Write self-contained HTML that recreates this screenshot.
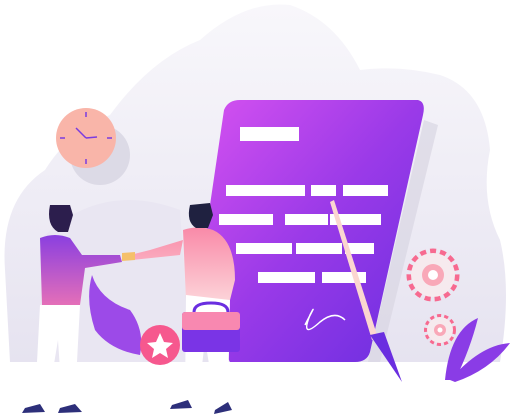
<!DOCTYPE html>
<html><head><style>html,body{margin:0;padding:0;background:#fff;}svg{display:block}</style></head>
<body>
<svg width="512" height="417" viewBox="0 0 512 417" xmlns="http://www.w3.org/2000/svg">
<defs>
<linearGradient id="doc" x1="0" y1="0" x2="1" y2="1"><stop offset="0" stop-color="#d752f0"/><stop offset="0.5" stop-color="#9a3ae8"/><stop offset="1" stop-color="#6a2ee0"/></linearGradient>
<linearGradient id="bg" x1="0" y1="0" x2="0" y2="1"><stop offset="0" stop-color="#f8f7fb"/><stop offset="1" stop-color="#e6e3f0"/></linearGradient>
<linearGradient id="shirt1" x1="0" y1="0" x2="0" y2="1"><stop offset="0" stop-color="#8a3fe0"/><stop offset="1" stop-color="#e46fb8"/></linearGradient>
<linearGradient id="shirt2" x1="0" y1="0" x2="0" y2="1"><stop offset="0" stop-color="#f98aa8"/><stop offset="1" stop-color="#fcd2d8"/></linearGradient>
</defs>
<path d="M10 362 L5 270 Q0 200 45 170 Q70 130 110 115 Q150 60 200 40 Q245 0 290 5 Q335 20 360 70 Q400 65 440 75 Q485 90 490 150 Q480 200 500 240 Q512 290 500 362 Z" fill="url(#bg)"/>
<path d="M40 240 Q100 180 180 210 L190 362 L40 362 Z" fill="#e9e6f2"/>
<circle cx="100" cy="155" r="30" fill="#dcdae6"/>
<circle cx="86" cy="138" r="30" fill="#f9b5a9"/>
<g stroke="#7a3be0" stroke-width="1.5"><line x1="86" y1="112" x2="86" y2="117"/><line x1="86" y1="159" x2="86" y2="164"/><line x1="60" y1="138" x2="65" y2="138"/><line x1="107" y1="138" x2="112" y2="138"/><line x1="86" y1="138" x2="76" y2="128"/><line x1="86" y1="138" x2="97" y2="137"/></g>
<path d="M240 100 L418 100 Q426 102 423 115 L370 352 Q367 362 355 362 L230 362 L196 300 L224 110 Q228 100 240 100 Z" fill="url(#doc)"/>
<path d="M424 120 L438 125 L380 362 L368 362 Z" fill="#d8d6e2" opacity="0.7"/>
<g fill="#fff">
<rect x="240" y="127" width="59" height="14"/>
<rect x="226" y="185" width="79" height="11"/><rect x="311" y="185" width="25" height="11"/><rect x="343" y="185" width="45" height="11"/>
<rect x="219" y="214" width="54" height="11"/><rect x="285" y="214" width="43" height="11"/><rect x="330" y="214" width="51" height="11"/>
<rect x="236" y="243" width="56" height="11"/><rect x="296" y="243" width="46" height="11"/><rect x="345" y="243" width="29" height="11"/>
<rect x="258" y="272" width="57" height="11"/><rect x="322" y="272" width="44" height="11"/>
</g>
<path d="M305 325 Q318 300 310 315 Q300 340 320 322 Q335 310 345 320" stroke="#fff" stroke-width="1.5" fill="none"/>
<path d="M330 202 L334 200 L378 338 L372 340 Z" fill="#fbd6d0"/>
<path d="M370 335 L384 332 L402 382 Z" fill="#6a2ee0"/>
<circle cx="433" cy="275" r="24" fill="none" stroke="#f76a90" stroke-width="5" stroke-dasharray="6 4"/>
<circle cx="433" cy="275" r="22" fill="#f6eaee"/><circle cx="433" cy="275" r="11" fill="#f9a8b8"/><circle cx="433" cy="275" r="5" fill="#fff"/>
<circle cx="440" cy="330" r="14" fill="none" stroke="#f76a90" stroke-width="4" stroke-dasharray="4 3"/>
<circle cx="440" cy="330" r="13" fill="#f6eaee"/><circle cx="440" cy="330" r="6" fill="#f9a8b8"/><circle cx="440" cy="330" r="2.5" fill="#fff"/>
<path d="M445 380 Q450 330 478 318 Q470 350 455 380 Z M450 380 Q480 345 510 343 Q490 370 455 382 Z" fill="#8a3ce6"/>
<path d="M92 275 Q100 300 130 310 Q145 330 140 355 Q110 350 95 330 Q85 300 92 275 Z" fill="#9c4ae8"/>
<circle cx="160" cy="345" r="20" fill="#f6588e"/>
<path d="M160 333 L164 342 L173 343 L166 349 L168 358 L160 353 L152 358 L154 349 L147 343 L156 342 Z" fill="#fff"/>
<path d="M40 238 Q55 232 70 238 L82 255 L120 255 L122 262 L85 268 L80 305 L42 305 Z" fill="url(#shirt1)"/>
<path d="M40 305 L80 305 L75 400 L62 400 L58 340 L48 400 L35 400 Z" fill="#fff"/>
<path d="M50 205 L70 205 L73 215 L68 232 L58 232 Q46 225 50 205 Z" fill="#2c1e4d"/>
<path d="M25 408 L40 404 L45 412 L22 413 Z M60 408 L75 404 L82 412 L58 413 Z" fill="#2d2f7a"/>
<path d="M183 230 Q198 225 213 230 Q235 240 235 280 L230 300 L186 300 Z M183 240 L150 250 L130 255 L132 260 L180 255 Z" fill="url(#shirt2)"/>
<path d="M122 253 L135 252 L135 260 L122 261 Z" fill="#f5c06a"/>
<path d="M186 295 L230 300 L228 400 L215 400 L205 340 L198 400 L185 400 Z" fill="#fff"/>
<path d="M190 205 L210 203 L213 215 L208 228 L196 228 Q186 222 190 205 Z" fill="#1f2140"/>
<path d="M172 405 L188 400 L192 408 L170 409 Z M215 410 L228 402 L232 410 L214 414 Z" fill="#2d2f7a"/>
<rect x="182" y="312" width="58" height="40" rx="3" fill="#7a34e6"/>
<rect x="182" y="312" width="58" height="18" rx="3" fill="#f888b0"/>
<path d="M194 312 Q194 303 211 303 Q228 303 228 312" stroke="#6a2ee0" stroke-width="3" fill="none"/>
</svg>
</body></html>
